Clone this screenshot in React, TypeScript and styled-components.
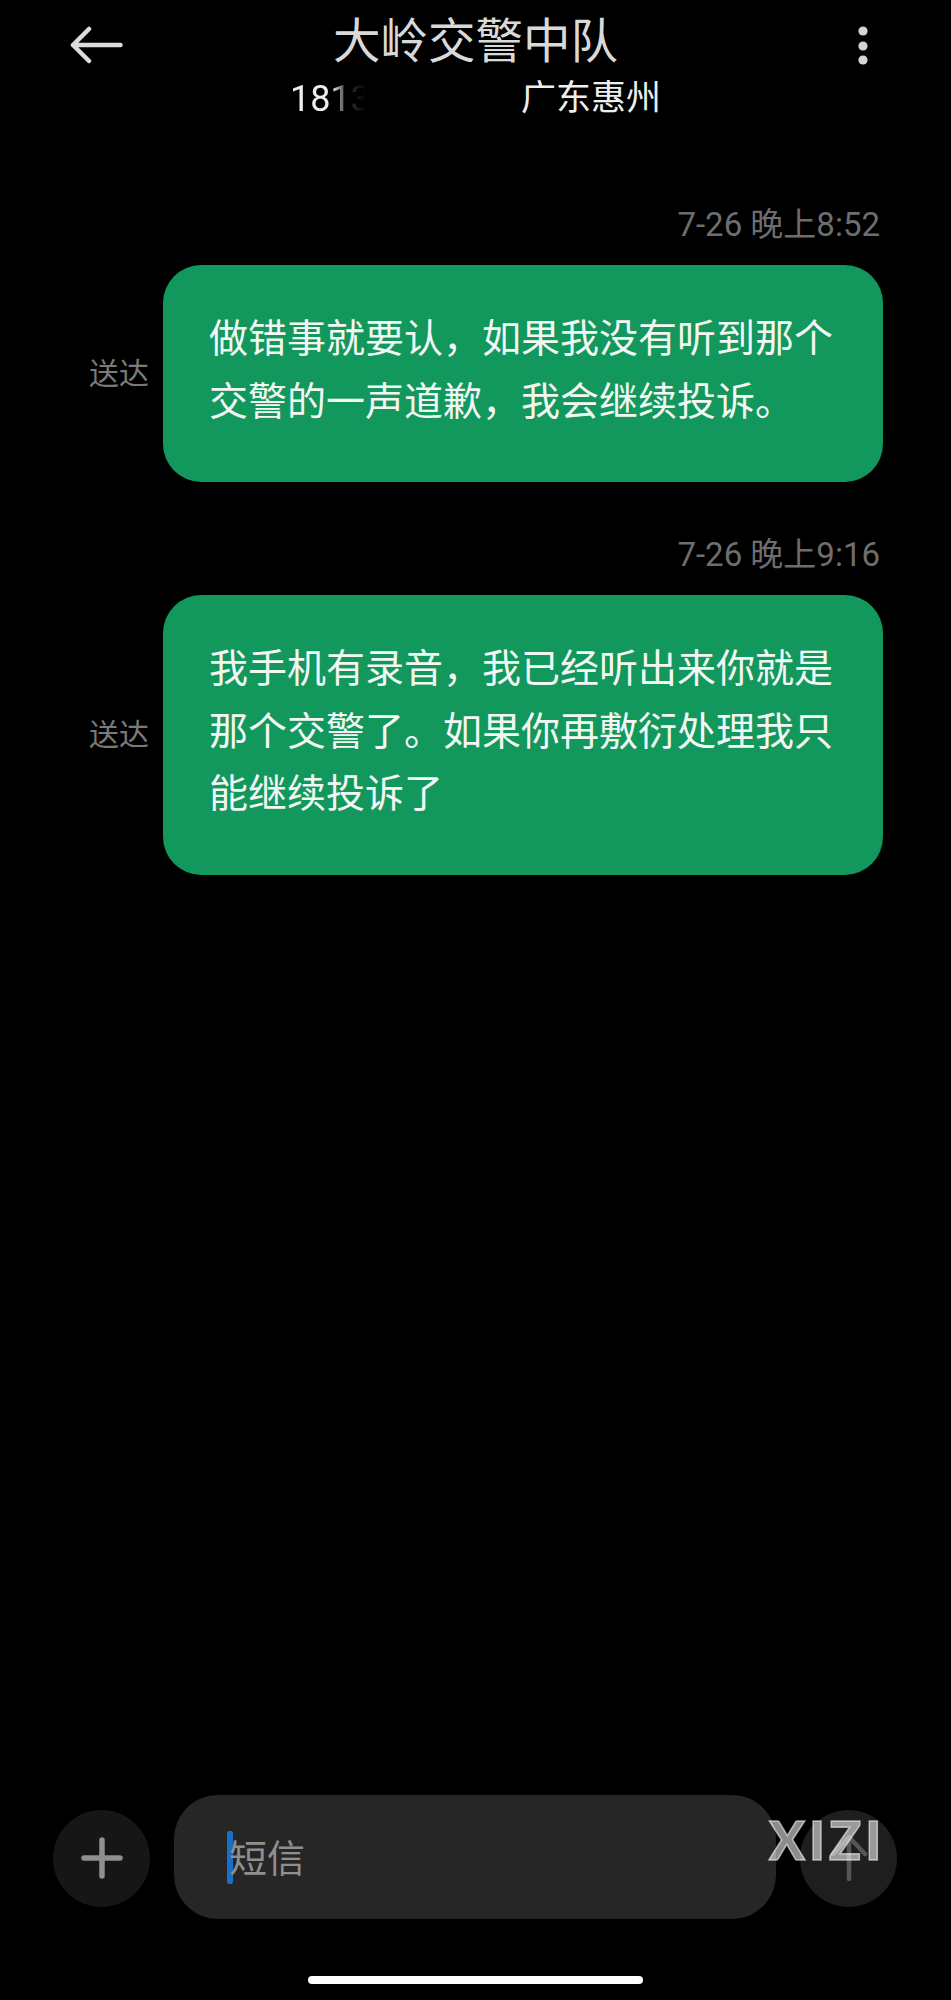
import React from "react";
import styled, { createGlobalStyle } from "styled-components";

const GlobalStyle = createGlobalStyle`
  html, body {
    margin: 0;
    padding: 0;
    background: #000;
  }
  body {
    font-family: Roboto, "Noto Sans CJK SC", sans-serif;
  }
`;

const Page = styled.div`
  width: 951px;
  height: 2000px;
  display: flex;
  flex-direction: column;
  background: #000;
  overflow: hidden;
`;

const Header = styled.header`
  display: grid;
  grid-template-columns: 1fr auto 1fr;
  height: 125px;
  padding: 12px 0 0;
  box-sizing: border-box;
`;

const BackButton = styled.div`
  display: flex;
  padding: 14px 0 0 70px;
`;

const MenuButton = styled.div`
  display: flex;
  justify-content: flex-end;
  padding: 14px 82px 0 0;
`;

const TitleGroup = styled.div`
  display: flex;
  flex-direction: column;
  align-items: center;
`;

const Title = styled.div`
  font-size: 47.5px;
  line-height: 60px;
  color: #d9d9d9;
`;

const Subtitle = styled.div`
  display: flex;
  align-items: center;
  margin-top: 2px;
  font-size: 35px;
  line-height: 50px;
  color: #eeeeee;
`;

const PhoneNumber = styled.span`
  width: 220px;
  margin-right: 11px;
  overflow: hidden;
  white-space: nowrap;
  font-size: 36px;
  -webkit-mask-image: linear-gradient(to right, #fff 42px, rgba(255, 255, 255, 0.25) 56px, transparent 76px);
  mask-image: linear-gradient(to right, #fff 42px, rgba(255, 255, 255, 0.25) 56px, transparent 76px);
`;

const Messages = styled.main`
  display: flex;
  flex-direction: column;
  padding-top: 78px;
`;

const Stamp = styled.div<{ $first?: boolean }>`
  margin-top: ${(p) => (p.$first ? "0" : "51px")};
  padding-right: 71px;
  text-align: right;
  font-size: 33px;
  line-height: 44px;
  color: #6e6e6e;
`;

const MessageRow = styled.div`
  display: flex;
  justify-content: flex-end;
  align-items: center;
  gap: 14px;
  margin-top: 18px;
  padding-right: 68px;
`;

const Delivered = styled.span`
  font-size: 30px;
  line-height: 40px;
  color: #7a7a7a;
`;

const Bubble = styled.div`
  width: 720px;
  box-sizing: border-box;
  padding: 43px 46px 49px;
  border-radius: 38px;
  background: #12975c;
  color: #f2f7f4;
  font-size: 39px;
  line-height: 62.5px;
`;

const Composer = styled.footer`
  position: relative;
  display: flex;
  align-items: center;
  gap: 24px;
  margin-top: auto;
  padding-left: 53px;
`;

const RoundButton = styled.div<{ $tone: string }>`
  display: flex;
  align-items: center;
  justify-content: center;
  width: 97px;
  height: 97px;
  margin-top: 2px;
  border-radius: 50%;
  background: ${(p) => p.$tone};
`;

const InputBox = styled.div`
  display: flex;
  align-items: center;
  width: 602px;
  height: 124px;
  box-sizing: border-box;
  padding-left: 53px;
  border-radius: 44px;
  background: #262626;
`;

const Caret = styled.span`
  width: 6px;
  height: 53px;
  margin-right: -4px;
  border-radius: 2px;
  background: #1c6fc9;
`;

const Placeholder = styled.span`
  position: relative;
  top: 2px;
  font-size: 38px;
  line-height: 50px;
  color: #8f8f8f;
`;

const Watermark = styled.span`
  position: absolute;
  left: 769px;
  top: 17px;
  font-family: Lato, sans-serif;
  font-weight: 900;
  font-size: 53px;
  line-height: 56px;
  letter-spacing: 4px;
  color: rgba(255, 255, 255, 0.55);
  -webkit-text-stroke: 1.5px rgba(255, 255, 255, 0.55);
  filter: blur(0.6px);
`;

const HomeBar = styled.div`
  align-self: center;
  width: 335px;
  height: 8px;
  margin: 57px 0 16px;
  border-radius: 4px;
  background: #fff;
`;

export default function App() {
  return (
    <Page>
      <GlobalStyle />
      <Header>
        <BackButton>
          <svg width="54" height="38" viewBox="0 0 54 38" fill="none" stroke="#dddddd" strokeWidth="4.5" strokeLinecap="round" strokeLinejoin="round">
            <path d="M3 19H50.5M19 3L3 19L19 35" />
          </svg>
        </BackButton>
        <TitleGroup>
          <Title>大岭交警中队</Title>
          <Subtitle>
            <PhoneNumber>1813</PhoneNumber>
            广东惠州
          </Subtitle>
        </TitleGroup>
        <MenuButton>
          <svg width="12" height="40" viewBox="0 0 12 40" fill="#d4d4d4">
            <circle cx="6" cy="5" r="4.6" />
            <circle cx="6" cy="20" r="4.6" />
            <circle cx="6" cy="34" r="4.6" />
          </svg>
        </MenuButton>
      </Header>

      <Messages>
        <Stamp $first>7-26 晚上8:52</Stamp>
        <MessageRow>
          <Delivered>送达</Delivered>
          <Bubble>做错事就要认，如果我没有听到那个交警的一声道歉，我会继续投诉。</Bubble>
        </MessageRow>
        <Stamp>7-26 晚上9:16</Stamp>
        <MessageRow>
          <Delivered>送达</Delivered>
          <Bubble>我手机有录音，我已经听出来你就是那个交警了。如果你再敷衍处理我只能继续投诉了</Bubble>
        </MessageRow>
      </Messages>

      <Composer>
        <RoundButton $tone="#161616">
          <svg width="42" height="42" viewBox="0 0 42 42" fill="none" stroke="#8f8f8f" strokeWidth="5.5" strokeLinecap="round">
            <path d="M21 3V39M3 21H39" />
          </svg>
        </RoundButton>
        <InputBox>
          <Caret />
          <Placeholder>短信</Placeholder>
        </InputBox>
        <RoundButton $tone="#1e1e1e">
          <svg width="38" height="50" viewBox="0 0 38 50" fill="none" stroke="#565656" strokeWidth="4.5" strokeLinecap="round" strokeLinejoin="round">
            <path d="M19 46V4M3 21L19 4L35 21" />
          </svg>
        </RoundButton>
        <Watermark>XIZI</Watermark>
      </Composer>
      <HomeBar />
    </Page>
  );
}
